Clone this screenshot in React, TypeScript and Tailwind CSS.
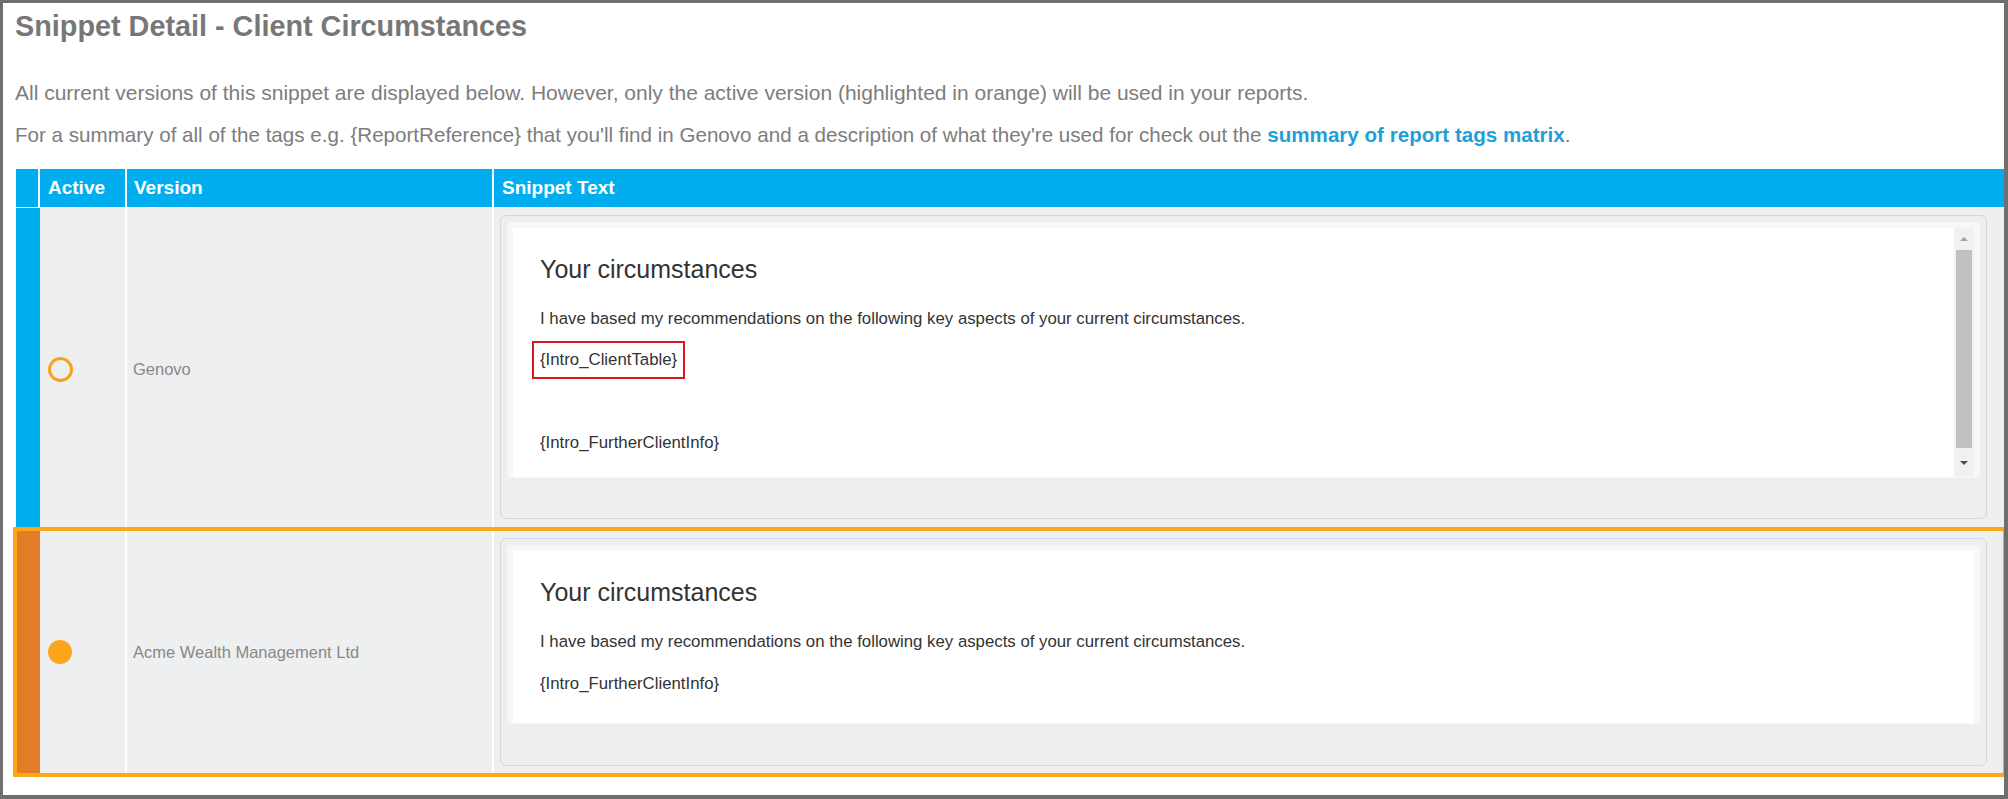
import React from "react";

const rows = [
    { version: "Genovo", active: false, withTable: true },
    { version: "Acme Wealth Management Ltd", active: true, withTable: false },
];

function Radio({ on }: { on: boolean }) {
    if (on) return <div className="w-[24px] h-[24px] rounded-full bg-[#fba51c]" />;
    return <div className="w-[25px] h-[25px] rounded-full border-[3px] border-[#f8a11f]" />;
}

function Scrollbar() {
    return (
        <div className="w-[20px] bg-[#f1f1f1] flex flex-col items-center">
            <div className="h-[22px] flex items-center justify-center">
                <div className="w-0 h-0 border-x-[4px] border-x-transparent border-b-[4px] border-b-[#a3a3a3]" />
            </div>
            <div className="w-[16px] h-[198px] bg-[#c1c1c1]" />
            <div className="flex-1 flex items-center justify-center">
                <div className="w-0 h-0 border-x-[4px] border-x-transparent border-t-[4px] border-t-[#505050]" />
            </div>
        </div>
    );
}

function Snippet({ withTable }: { withTable: boolean }) {
    return (
        <div
            className={`rounded-[6px] border border-[#d5d7da] bg-[#eceef0] pt-[6px] px-[6px] ${withTable ? "h-[304px]" : "h-[228px]"}`}
        >
            <div className="bg-[#f6f7f8] rounded-[4px] pt-[6px] pl-[6px] pr-[6px] pb-px">
                <div className={`flex ${withTable ? "h-[249px]" : "h-[172px]"}`}>
                    <div className="flex-1 bg-white pl-[27px] pt-[26px] overflow-hidden text-[#333]">
                        <h3 className="text-[25px] leading-[30px]">Your circumstances</h3>
                        <p className="mt-[25px] text-[16.8px] leading-[20px]">
                            I have based my recommendations on the following key aspects of your current circumstances.
                        </p>
                        {withTable && (
                            <>
                                <p className="mt-[21px] text-[16.8px] leading-[20px]">
                                    <span className="inline-block -my-[9px] -ml-[8px] px-[6px] py-[7px] border-2 border-[#d9181f]">
                                        {"{Intro_ClientTable}"}
                                    </span>
                                </p>
                                <p className="mt-[21px] text-[16.8px] leading-[20px]">&nbsp;</p>
                            </>
                        )}
                        <p className="mt-[22px] text-[16.8px] leading-[20px]">{"{Intro_FurtherClientInfo}"}</p>
                    </div>
                    {withTable && <Scrollbar />}
                </div>
            </div>
        </div>
    );
}

export default function App() {
    return (
        <div className="w-[2008px] h-[799px] overflow-hidden bg-white border-[#6f6f6f] border-l-[3px] border-t-[3px] border-r-4 border-b-4 font-['Liberation_Sans',Arial,sans-serif]">
            <div className="pl-[12px]">
                <h1 className="mt-[6px] text-[28.8px] leading-[34px] font-bold text-[#777]">
                    Snippet Detail - Client Circumstances
                </h1>
                <p className="mt-[38px] text-[21px] leading-[24px] text-[#7d7d7d]">
                    All current versions of this snippet are displayed below. However, only the active version (highlighted in orange) will be used in your reports.
                </p>
                <p className="mt-[18px] text-[20.6px] leading-[24px] text-[#7d7d7d]">
                    For a summary of all of the tags e.g. {"{ReportReference}"} that you'll find in Genovo and a description of what they're used for check out the{" "}
                    <a className="font-bold text-[#1e9fd9]">summary of report tags matrix</a>.
                </p>

                {/* Table */}
                <div className="mt-[22px] ml-px">
                    <div className="grid grid-cols-[24px_87px_367px_1fr] h-[39px] bg-[#00aeef] border-b border-white text-white font-bold text-[19px]">
                        <div className="border-r-2 border-white" />
                        <div className="border-r-2 border-white pl-[8px] flex items-center">Active</div>
                        <div className="border-r-2 border-white pl-[7px] flex items-center">Version</div>
                        <div className="pl-[8px] flex items-center">Snippet Text</div>
                    </div>

                    {rows.map((r) => (
                        <div
                            key={r.version}
                            className={`grid grid-cols-[24px_87px_367px_1fr] bg-[#eeeff1] ${r.active
                                ? "h-[244px] outline-4 outline-[#fca61c] -outline-offset-1 relative"
                                : "h-[322px]"
                                }`}
                        >
                            <div className={r.active ? "bg-[#e27c27]" : "bg-[#00aeef]"} />
                            <div className="border-r-2 border-white pl-[8px] flex items-center">
                                <Radio on={r.active} />
                            </div>
                            <div className="border-r-2 border-white pl-[6px] flex items-center text-[16.5px] text-[#888]">
                                {r.version}
                            </div>
                            <div className={`pl-[6px] pr-[17px] ${r.active ? "pt-[8px]" : "pt-[7px]"}`}>
                                <Snippet withTable={r.withTable} />
                            </div>
                        </div>
                    ))}
                </div>
            </div>
        </div>
    );
}
